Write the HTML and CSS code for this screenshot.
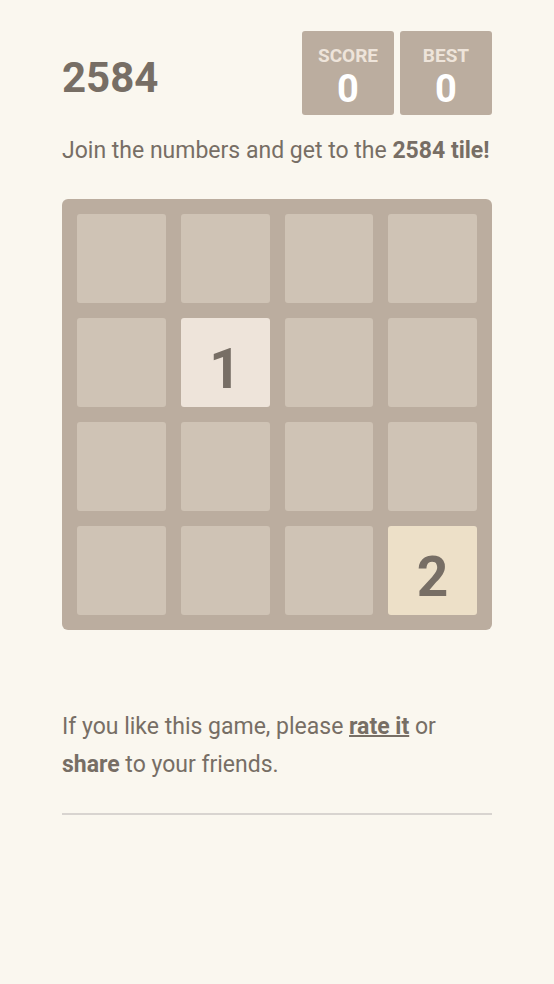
FILE: index.html
```html
<!DOCTYPE html>
<html lang="en">
<head>
    <meta charset="UTF-8">
    <meta name="viewport" content="width=device-width, initial-scale=1.0">
    <title>2584</title>
    <link rel="stylesheet" href="styles.css">
</head>
<body>
    <div class="container">
        <!-- Header -->
        <div class="heading">
            <h1 class="title">2584</h1>
            <div class="scores">
                <div class="score-box">
                    <span class="score-label">SCORE</span>
                    <span class="score-value">0</span>
                </div>
                <div class="score-box">
                    <span class="score-label">BEST</span>
                    <span class="score-value">0</span>
                </div>
            </div>
        </div>

        <p class="intro">Join the numbers and get to the <strong>2584 tile!</strong></p>

        <!-- Board -->
        <div class="board">
            <div class="cell"></div>
            <div class="cell"></div>
            <div class="cell"></div>
            <div class="cell"></div>
            <div class="cell"></div>
            <div class="cell tile-1">1</div>
            <div class="cell"></div>
            <div class="cell"></div>
            <div class="cell"></div>
            <div class="cell"></div>
            <div class="cell"></div>
            <div class="cell"></div>
            <div class="cell"></div>
            <div class="cell"></div>
            <div class="cell"></div>
            <div class="cell tile-2">2</div>
        </div>

        <p class="footer-text">If you like this game, please <a href="#">rate it</a> or <strong>share</strong> to your friends.</p>
        <hr class="divider">
    </div>
</body>
</html>
```

FILE: styles.css
```css
body {
    margin: 0;
    font-family: Roboto, 'Liberation Sans', sans-serif;
    background-color: #faf7ef;
    color: #776e65;
}

.container {
    width: 430px;
    margin: 0 auto;
    padding-top: 31px;
}

.heading {
    display: flex;
    justify-content: space-between;
    align-items: center;
}

.title {
    margin: 0;
    font-size: 42px;
    font-weight: bold;
    padding-top: 8px;
}

.scores {
    display: flex;
    gap: 6px;
}

.score-box {
    width: 92px;
    height: 84px;
    background-color: #bbad9f;
    border-radius: 3px;
    display: flex;
    flex-direction: column;
    align-items: center;
    box-sizing: border-box;
    padding-top: 13px;
}

.score-label {
    font-size: 19px;
    font-weight: bold;
    color: #eee4da;
    line-height: 24px;
}

.score-value {
    font-size: 38px;
    font-weight: bold;
    color: white;
    line-height: 42px;
}

.intro {
    margin: 21px 0 0;
    font-size: 23px;
    line-height: 30px;
}

.board {
    margin-top: 33px;
    width: 430px;
    height: 431px;
    box-sizing: border-box;
    padding: 15px;
    background-color: #bbad9f;
    border-radius: 6px;
    display: grid;
    grid-template-columns: repeat(4, 1fr);
    grid-template-rows: repeat(4, 1fr);
    gap: 15px;
}

.cell {
    background-color: #cfc3b5;
    border-radius: 3px;
    display: flex;
    justify-content: center;
    align-items: center;
    padding-top: 13px;
    font-size: 55px;
    font-weight: bold;
    color: #776e65;
}

.tile-1 {
    background-color: #eee4da;
}

.tile-2 {
    background-color: #ede0c8;
}

.footer-text {
    margin: 78px 0 0;
    font-size: 23px;
    line-height: 38px;
}

.footer-text a {
    color: #776e65;
    font-weight: bold;
    text-decoration-thickness: 2px;
}

.divider {
    margin: 29px 0 0;
    border: none;
    border-top: 2px solid #d8d4d0;
}
```
